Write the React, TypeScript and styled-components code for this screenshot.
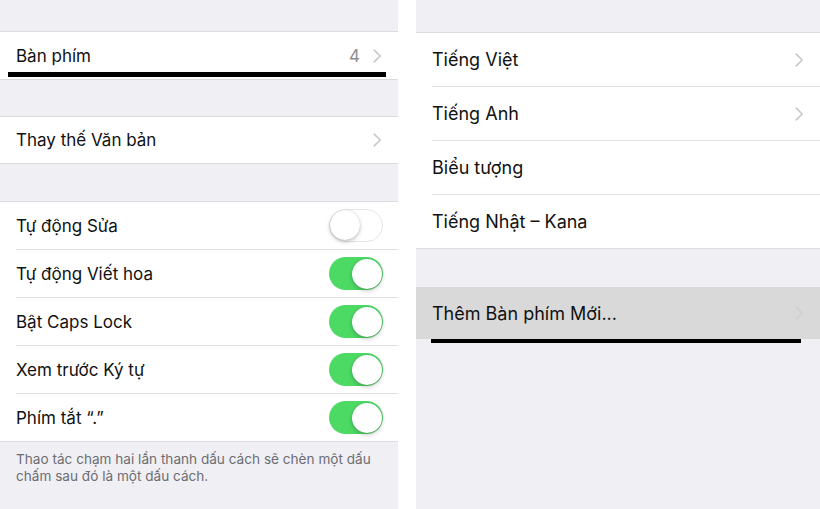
import React from "react";
import styled, { createGlobalStyle } from "styled-components";

const GlobalStyle = createGlobalStyle`
  html, body {
    margin: 0;
    padding: 0;
    background: #ffffff;
  }
  body {
    font-family: Inter, "Noto Sans", "Liberation Sans", sans-serif;
    -webkit-font-smoothing: antialiased;
  }
`;

const Screen = styled.div`
  display: flex;
  gap: 18px;
  width: 820px;
  height: 509px;
  overflow: hidden;
`;

const Panel = styled.div<{ $width: number }>`
  position: relative;
  width: ${(p) => p.$width}px;
  flex: none;
  height: 100%;
  background: #efeff4;
  display: flex;
  flex-direction: column;
`;

const Spacer = styled.div<{ $h: number }>`
  height: ${(p) => p.$h}px;
  flex: none;
`;

const Group = styled.div`
  background: #ffffff;
  border-top: 1px solid #dcdce0;
  border-bottom: 1px solid #dcdce0;
`;

const Row = styled.div<{ $h: number; $inset: number; $active?: boolean }>`
  position: relative;
  height: ${(p) => p.$h}px;
  display: flex;
  align-items: center;
  padding: 0 ${(p) => p.$inset}px;
  background: ${(p) => (p.$active ? "#d9d9d9" : "transparent")};

  & + & {
    border-top: 1px solid #e0e0e4;
    margin-left: ${(p) => p.$inset}px;
    padding-left: 0;
  }
`;

const Label = styled.span<{ $size: number }>`
  flex: 1;
  font-size: ${(p) => p.$size}px;
  font-weight: 400;
  color: #111111;
`;

const Value = styled.span`
  font-size: 17px;
  color: #8e8e93;
  margin-right: 13px;
`;

const Chevron = styled.svg<{ $faint?: boolean }>`
  width: 9px;
  height: 14px;
  flex: none;
  opacity: ${(p) => (p.$faint ? 0.55 : 1)};
`;

const Track = styled.div<{ $on: boolean }>`
  position: relative;
  width: 54px;
  height: 33px;
  border-radius: 17px;
  box-sizing: border-box;
  flex: none;
  margin-right: -1px;
  background: ${(p) => (p.$on ? "#4cd964" : "#ffffff")};
  border: ${(p) => (p.$on ? "none" : "1.5px solid #e5e5ea")};
`;

const Knob = styled.div<{ $on: boolean }>`
  position: absolute;
  top: ${(p) => (p.$on ? "1.5px" : "0")};
  ${(p) => (p.$on ? "right: 1.5px;" : "left: 0;")}
  width: 30px;
  height: 30px;
  border-radius: 50%;
  background: #ffffff;
  box-shadow: 0 2px 4px rgba(0, 0, 0, 0.22), 0 0 1px rgba(0, 0, 0, 0.25);
`;

const Footnote = styled.p`
  margin: 0;
  padding: 9px 16px 0;
  font-size: 13.6px;
  line-height: 17px;
  color: #6d6d72;
`;

const Underline = styled.div<{ $top: number; $left: number; $width: number; $h: number }>`
  position: absolute;
  top: ${(p) => p.$top}px;
  left: ${(p) => p.$left}px;
  width: ${(p) => p.$width}px;
  height: ${(p) => p.$h}px;
  background: #000000;
`;

const Disclosure = ({ faint }: { faint?: boolean }) => (
  <Chevron viewBox="0 0 9 14" $faint={faint}>
    <path d="M1.2 1.2 L7.2 7 L1.2 12.8" fill="none" stroke="#c7c7cc" strokeWidth="1.6" strokeLinecap="round" strokeLinejoin="round" />
  </Chevron>
);

const Switch = ({ on }: { on: boolean }) => (
  <Track $on={on}>
    <Knob $on={on} />
  </Track>
);

const toggles = [
  { label: "Tự động Sửa", on: false },
  { label: "Tự động Viết hoa", on: true },
  { label: "Bật Caps Lock", on: true },
  { label: "Xem trước Ký tự", on: true },
  { label: "Phím tắt “.”", on: true },
];

const keyboards = ["Tiếng Việt", "Tiếng Anh", "Biểu tượng", "Tiếng Nhật – Kana"];

export default function App() {
  return (
    <>
      <GlobalStyle />
      <Screen>
        <Panel $width={398}>
          <Spacer $h={31} />
          <Group>
            <Row $h={47} $inset={16}>
              <Label $size={17}>Bàn phím</Label>
              <Value>4</Value>
              <Disclosure />
            </Row>
          </Group>
          <Spacer $h={36} />
          <Group>
            <Row $h={46} $inset={16}>
              <Label $size={17}>Thay thế Văn bản</Label>
              <Disclosure />
            </Row>
          </Group>
          <Spacer $h={37} />
          <Group>
            {toggles.map((t) => (
              <Row key={t.label} $h={47} $inset={16}>
                <Label $size={17}>{t.label}</Label>
                <Switch on={t.on} />
              </Row>
            ))}
          </Group>
          <Footnote>
            Thao tác chạm hai lần thanh dấu cách sẽ chèn một dấu chấm sau đó là một dấu cách.
          </Footnote>
          <Underline $top={72} $left={8} $width={378} $h={5} />
        </Panel>

        <Panel $width={404}>
          <Spacer $h={32} />
          <Group>
            {keyboards.map((k, i) => (
              <Row key={k} $h={53} $inset={16}>
                <Label $size={18}>{k}</Label>
                {i < 2 && <Disclosure />}
              </Row>
            ))}
          </Group>
          <Spacer $h={38} />
          <Row $h={52} $inset={16} $active>
            <Label $size={18}>Thêm Bàn phím Mới...</Label>
            <Disclosure faint />
          </Row>
          <Underline $top={339} $left={15} $width={370} $h={4} />
        </Panel>
      </Screen>
    </>
  );
}
